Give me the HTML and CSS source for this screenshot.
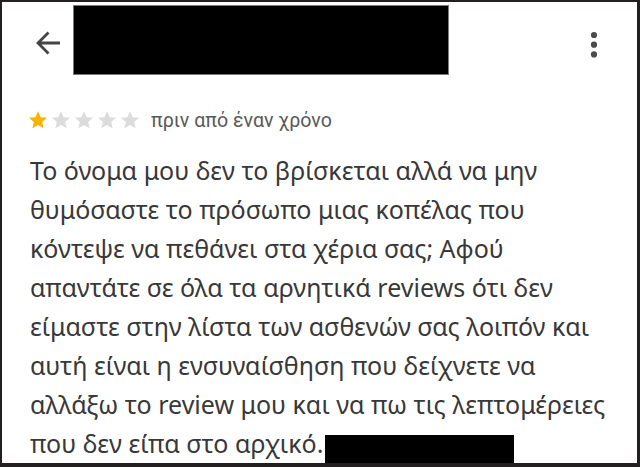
FILE: index.html
```html
<!DOCTYPE html>
<html lang="el">
<head>
<meta charset="utf-8">
<link rel="stylesheet" href="styles.css">
</head>
<body>
<div class="frame">
  <header class="top">
    <svg class="back" width="26" height="26" viewBox="0 0 26 26"><path d="M25 13H3M13.5 2.5L3 13l10.5 10.5" fill="none" stroke="#444" stroke-width="2.8"/></svg>
    <div class="redact-title"></div>
    <svg class="more" width="8" height="28" viewBox="0 0 8 28"><circle cx="4" cy="4" r="3.1" fill="#4a4a4a"/><circle cx="4" cy="13.7" r="3.1" fill="#4a4a4a"/><circle cx="4" cy="23.4" r="3.1" fill="#4a4a4a"/></svg>
  </header>
  <div class="rating">
    <div class="stars">
      <svg class="star on" viewBox="0 0 24 24"><path d="M12 1.5l3.1 7.1 7.7.7-5.8 5.1 1.7 7.6L12 18l-6.7 4 1.7-7.6-5.8-5.1 7.7-.7z"/></svg>
      <svg class="star" viewBox="0 0 24 24"><path d="M12 1.5l3.1 7.1 7.7.7-5.8 5.1 1.7 7.6L12 18l-6.7 4 1.7-7.6-5.8-5.1 7.7-.7z"/></svg>
      <svg class="star" viewBox="0 0 24 24"><path d="M12 1.5l3.1 7.1 7.7.7-5.8 5.1 1.7 7.6L12 18l-6.7 4 1.7-7.6-5.8-5.1 7.7-.7z"/></svg>
      <svg class="star" viewBox="0 0 24 24"><path d="M12 1.5l3.1 7.1 7.7.7-5.8 5.1 1.7 7.6L12 18l-6.7 4 1.7-7.6-5.8-5.1 7.7-.7z"/></svg>
      <svg class="star" viewBox="0 0 24 24"><path d="M12 1.5l3.1 7.1 7.7.7-5.8 5.1 1.7 7.6L12 18l-6.7 4 1.7-7.6-5.8-5.1 7.7-.7z"/></svg>
    </div>
    <span class="when">πριν από έναν χρόνο</span>
  </div>
  <p class="review">Το όνομα μου δεν το βρίσκεται αλλά να μην θυμόσαστε το πρόσωπο μιας κοπέλας που κόντεψε να πεθάνει στα χέρια σας; Αφού απαντάτε σε όλα τα αρνητικά reviews ότι δεν είμαστε στην λίστα των ασθενών σας λοιπόν και αυτή είναι η ενσυναίσθηση που δείχνετε να αλλάξω το review μου και να πω τις λεπτομέρειες που δεν είπα στο αρχικό.<span class="redact-inline"></span></p>
</div>
</body>
</html>
```

FILE: styles.css
```css
html, body {
  margin: 0;
  padding: 0;
  background: #231f20;
}
.frame {
  box-sizing: border-box;
  width: 640px;
  height: 467px;
  border-style: solid;
  border-color: #231f20;
  border-width: 2px 3px 4px 2px;
  background: #fff;
  overflow: hidden;
  font-family: "Noto Sans", "Open Sans", sans-serif;
}
.top {
  display: flex;
  align-items: flex-start;
  height: 70px;
  padding-top: 3px;
}
.back {
  margin-left: 33px;
  margin-top: 25px;
  flex: none;
}
.redact-title {
  box-sizing: border-box;
  width: 376px;
  height: 70px;
  margin-left: 12px;
  background: #000;
  border: 1px solid #7a7a7a;
  flex: none;
}
.more {
  margin-left: auto;
  margin-right: 39px;
  margin-top: 26px;
  flex: none;
}
.rating {
  display: flex;
  align-items: center;
  margin-top: 34px;
  padding-left: 26px;
  height: 22px;
}
.stars {
  display: flex;
  gap: 3px;
}
.star {
  width: 20px;
  height: 20px;
  fill: #dcdcde;
}
.star.on {
  fill: #f6b300;
}
.when {
  margin-left: 11px;
  font-family: Roboto, sans-serif;
  font-size: 19.6px;
  color: #5a5a5a;
}
.review {
  margin: 20px 0 0 0;
  padding: 0 25px 0 28px;
  font-size: 25px;
  line-height: 39px;
  color: #383838;
}
.redact-inline {
  display: inline-block;
  width: 189px;
  height: 30px;
  margin-left: 2px;
  background: #000;
  vertical-align: -12px;
}
```
